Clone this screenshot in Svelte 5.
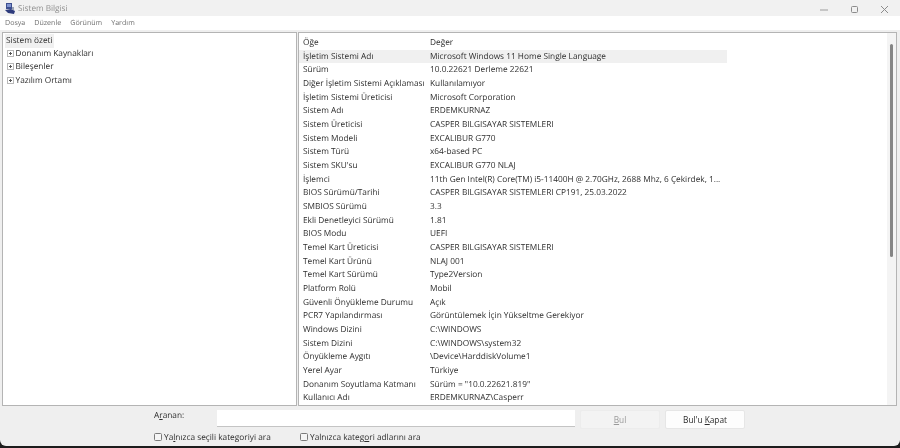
<script>
  const rows = [
    ['İşletim Sistemi Adı','Microsoft Windows 11 Home Single Language'],
    ['Sürüm','10.0.22621 Derleme 22621'],
    ['Diğer İşletim Sistemi Açıklaması','Kullanılamıyor'],
    ['İşletim Sistemi Üreticisi','Microsoft Corporation'],
    ['Sistem Adı','ERDEMKURNAZ'],
    ['Sistem Üreticisi','CASPER BILGISAYAR SISTEMLERI'],
    ['Sistem Modeli','EXCALIBUR G770'],
    ['Sistem Türü','x64-based PC'],
    ['Sistem SKU\'su','EXCALIBUR G770 NLAJ'],
    ['İşlemci','11th Gen Intel(R) Core(TM) i5-11400H @ 2.70GHz, 2688 Mhz, 6 Çekirdek, 1...'],
    ['BIOS Sürümü/Tarihi','CASPER BILGISAYAR SISTEMLERI CP191, 25.03.2022'],
    ['SMBIOS Sürümü','3.3'],
    ['Ekli Denetleyici Sürümü','1.81'],
    ['BIOS Modu','UEFI'],
    ['Temel Kart Üreticisi','CASPER BILGISAYAR SISTEMLERI'],
    ['Temel Kart Ürünü','NLAJ 001'],
    ['Temel Kart Sürümü','Type2Version'],
    ['Platform Rolü','Mobil'],
    ['Güvenli Önyükleme Durumu','Açık'],
    ['PCR7 Yapılandırması','Görüntülemek İçin Yükseltme Gerekiyor'],
    ['Windows Dizini','C:\\WINDOWS'],
    ['Sistem Dizini','C:\\WINDOWS\\system32'],
    ['Önyükleme Aygıtı','\\Device\\HarddiskVolume1'],
    ['Yerel Ayar','Türkiye'],
    ['Donanım Soyutlama Katmanı','Sürüm = "10.0.22621.819"'],
    ['Kullanıcı Adı','ERDEMKURNAZ\\Casperr'],
  ];
  const tree = ['Donanım Kaynakları','Bileşenler','Yazılım Ortamı'];
</script>

<div class="win">
  <header class="title">
    <svg class="logo" width="10" height="11" viewBox="0 0 10 11">
      <rect x="1" y="0" width="6" height="6" fill="#3d4f8f"/>
      <rect x="2" y="1" width="4" height="3" fill="#7f93cf"/>
      <path d="M0 7l6-1 4 2-1 3-6-1z" fill="#2d3b7c"/>
      <rect x="7" y="4" width="2" height="3" fill="#9aa3b5"/>
    </svg>
    <span class="title-text">Sistem Bilgisi</span>
    <div class="controls">
      <svg width="10" height="10" viewBox="0 0 10 10"><path d="M0 5h8" stroke="#9c9c9c" stroke-width="1"/></svg>
      <svg width="10" height="10" viewBox="0 0 10 10"><rect x="1.5" y="1.5" width="6" height="6" rx="1" fill="none" stroke="#8c8c8c"/></svg>
      <svg width="10" height="10" viewBox="0 0 10 10"><path d="M1 1l7 7M8 1l-7 7" stroke="#8c8c8c"/></svg>
    </div>
  </header>
  <nav class="menu">
    <span>Dosya</span><span>Düzenle</span><span>Görünüm</span><span>Yardım</span>
  </nav>
  <main class="panes">
    <section class="tree">
      <div class="summary"><span>Sistem özeti</span></div>
      {#each tree as t}
        <div class="node"><i class="plus"></i><span>{t}</span></div>
      {/each}
    </section>
    <section class="list">
      <div class="table">
        <div class="row head"><span class="k">Öğe</span><span class="v">Değer</span></div>
        {#each rows as r, i}
          <div class="row" class:sel={i === 0}><span class="k">{r[0]}</span><span class="v">{r[1]}</span></div>
        {/each}
      </div>
      <div class="scroll"><div class="thumb"></div></div>
    </section>
  </main>
  <footer class="find">
    <div class="line1">
      <span class="lbl">A<u>r</u>anan:</span>
      <div class="input"></div>
      <button class="btn off"><u>B</u>ul</button>
      <button class="btn">Bul'u <u>K</u>apat</button>
    </div>
    <div class="line2">
      <div class="chk c1"><i></i><span>Ya<u>l</u>nızca seçili kategoriyi ara</span></div>
      <div class="chk"><i></i><span>Yalnızca kateg<u>o</u>ri adlarını ara</span></div>
    </div>
  </footer>
</div>

<style>
  :global(body) { margin: 0; background: #1c1c1c; }
  .win {
    width: 900px; height: 446px; background: #efefef; overflow: hidden;
    border-radius: 0 0 6px 6px;
    font-family: "Open Sans", "Noto Sans", sans-serif; font-size: 8.3px; color: #2e2e2e;
    text-rendering: geometricPrecision;
    display: flex; flex-direction: column;
    filter: blur(0.3px);
  }
  .title { height: 16px; background: #f1f1f1; display: flex; align-items: center; padding-left: 5px; flex: none; }
  .logo { margin-right: 3px; }
  .title-text { color: #8f8f8f; font-size: 8.2px; }
  .controls { margin-left: auto; display: flex; gap: 20px; padding-right: 10px; padding-top: 3px; }
  .menu { height: 14px; background: #fff; display: flex; gap: 9px; padding-left: 5px; align-items: center; color: #6f6f6f; flex: none; font-size: 7.1px; }
  .panes { display: flex; gap: 1px; height: 374px; margin: 2px 3px 0 2px; flex: none; }
  .tree { width: 295px; border: 1px solid #b4b4b4; background: #fff; box-sizing: border-box; padding: 0 2px; }
  .summary { height: 15px; }
  .summary span { background: #f0f0f0; padding: 0 1px; display: inline-block; line-height: 14px; margin-top: 1px; }
  .node { display: flex; align-items: center; height: 13.3px; padding-left: 2px; gap: 1.5px; margin-top: -1px; margin-bottom: 1px; }
  .plus { width: 7px; height: 7px; border: 1px solid #b8b8b8; box-sizing: border-box; position: relative; }
  .plus::before { content: ""; position: absolute; left: 1px; top: 2px; width: 3px; height: 1px; background: #555; }
  .plus::after { content: ""; position: absolute; left: 2px; top: 1px; width: 1px; height: 3px; background: #555; }
  .list { flex: 1; border: 1px solid #b4b4b4; background: #fff; box-sizing: border-box; display: flex; }
  .table { flex: 1; padding: 2px 0 0 0; }
  .row { height: 13.68px; line-height: 13.68px; display: flex; width: 428px; white-space: nowrap; }
  .head { height: 14.6px; line-height: 15px; }
  .k { width: 131px; padding-left: 4px; box-sizing: border-box; flex: none; }
  .v { flex: 1; }
  .sel { background: #f0f0f0; }
  .scroll { width: 9px; background: #f4f4f4; flex: none; padding: 11px 3px 0 3px; box-sizing: border-box; }
  .thumb { width: 3px; height: 213px; background: #858585; border-radius: 2px; }
  .find { flex: 1; display: flex; flex-direction: column; }
  .line1 { display: flex; align-items: flex-start; margin-top: 4px; height: 19px; }
  .lbl { margin-left: 154px; width: 63px; line-height: 11px; flex: none; }
  .input { width: 358px; height: 17px; background: #fff; border-bottom: 1px solid #c4c4c4; box-sizing: border-box; margin-right: 5px; }
  .btn { width: 80px; height: 19px; border: 1px solid #e6e6e6; border-radius: 2px; background: #fdfdfd; font: inherit; color: #2a2a2a; padding: 0; margin: 0 5px 0 0; }
  .btn.off { background: #f3f3f3; color: #9a9a9a; border-color: #ececec; }
  .line2 { display: flex; margin-top: 2px; padding-left: 154px; }
  .chk { display: flex; align-items: center; gap: 2px; height: 12px; }
  .c1 { width: 146px; }
  .chk i { width: 8px; height: 8px; border: 1px solid #7a7a7a; border-radius: 1.5px; background: #f5f5f5; box-sizing: border-box; }
</style>
